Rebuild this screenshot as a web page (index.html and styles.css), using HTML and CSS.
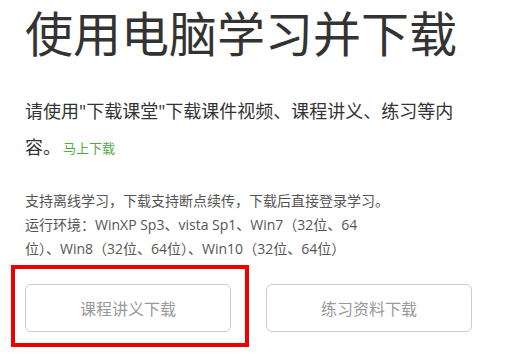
FILE: index.html
```html
<!DOCTYPE html>
<html lang="zh-CN">
<head>
<meta charset="utf-8">
<title>使用电脑学习并下载</title>
<link rel="stylesheet" href="styles.css">
</head>
<body>
<main class="page">
  <h1 class="title">使用电脑学习并下载</h1>
  <p class="intro"><span class="intro-text">请使用"下载课堂"下载课件视频、课程讲义、练习等内容。</span><a class="intro-link" href="#">马上下载</a></p>
  <p class="note">支持离线学习，下载支持断点续传，下载后直接登录学习。<br>运行环境：WinXP Sp3、vista Sp1、Win7（32位、64位）、Win8（32位、64位）、Win10（32位、64位）</p>
  <div class="actions">
    <a class="btn btn-highlighted" href="#">课程讲义下载</a>
    <a class="btn" href="#">练习资料下载</a>
  </div>
</main>
</body>
</html>
```
FILE: styles.css
```css
* { box-sizing: border-box; }
html, body {
  margin: 0;
  background: #fff;
}
body {
  font-family: "Open Sans", "Noto Sans CJK SC", sans-serif;
  color: #333;
}
.page {
  padding: 4px 0 25px 25px;
}
.title {
  margin: 0;
  font-size: 48px;
  line-height: 60px;
  font-weight: normal;
  color: #333;
}
.intro {
  margin: 29px 0 0;
  width: 436px;
  font-size: 18px;
  line-height: 36px;
  color: #333;
}
.intro-link {
  display: inline-block;
  margin-left: 2px;
  font-size: 13px;
  line-height: 20px;
  vertical-align: 1px;
  color: #56aa46;
  text-decoration: none;
}
.note {
  margin: 24px 0 0;
  width: 367px;
  font-size: 14px;
  line-height: 24px;
  color: #555;
}
.actions {
  display: flex;
  gap: 35px;
  margin-top: 23px;
}
.btn {
  position: relative;
  display: flex;
  align-items: center;
  justify-content: center;
  width: 206px;
  height: 48px;
  border: 1px solid #ccc;
  border-radius: 6px;
  font-size: 16px;
  color: #999;
  text-decoration: none;
}
.btn-highlighted::after {
  content: "";
  position: absolute;
  top: -20px;
  left: -15px;
  right: -19px;
  bottom: -16px;
  border: 4px solid #ee0000;
}
```
